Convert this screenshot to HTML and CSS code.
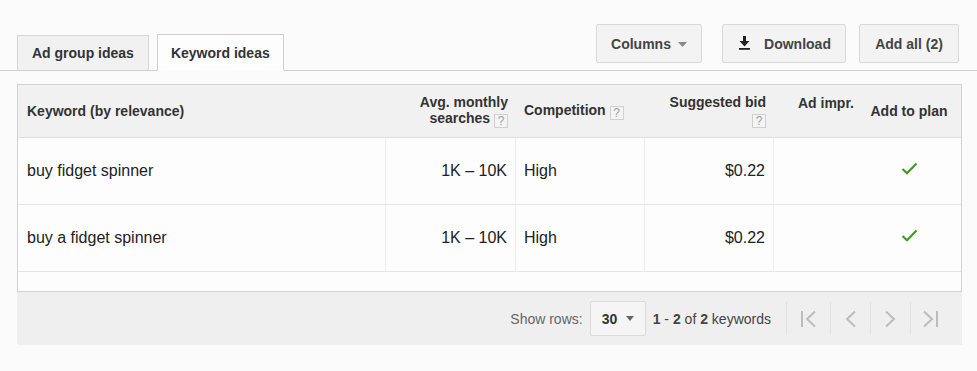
FILE: index.html
```html
<!DOCTYPE html>
<html lang="en">
<head>
    <meta charset="UTF-8">
    <title>Keyword ideas</title>
    <link rel="stylesheet" href="styles.css">
</head>
<body>
    <div class="toolbar">
        <div class="tabs">
            <div class="tab">Ad group ideas</div>
            <div class="tab active">Keyword ideas</div>
        </div>
        <div class="actions">
            <button class="btn btn-columns">
                Columns
                <svg class="caret" width="9" height="5" viewBox="0 0 9 5"><path d="M0 0 H9 L4.5 5 Z" fill="#888"/></svg>
            </button>
            <button class="btn btn-download">
                <svg class="dl-icon" width="11" height="14" viewBox="0 0 11 14">
                    <path d="M4 0 H7 V5 H10.5 L5.5 10.5 L0.5 5 H4 Z" fill="#222"/>
                    <rect x="0" y="12" width="11" height="1.8" fill="#222"/>
                </svg>
                Download
            </button>
            <button class="btn btn-addall">Add all (2)</button>
        </div>
    </div>

    <div class="grid">
        <table class="keyword-table">
            <colgroup>
                <col style="width: 368px">
                <col style="width: 130px">
                <col style="width: 129px">
                <col style="width: 129px">
                <col style="width: 83px">
                <col style="width: 104px">
            </colgroup>
            <thead>
                <tr>
                    <th class="col-keyword">Keyword (by relevance)</th>
                    <th class="col-num">Avg. monthly<br>searches <span class="help">?</span></th>
                    <th class="col-text">Competition <span class="help">?</span></th>
                    <th class="col-num">Suggested bid<br><span class="help">?</span></th>
                    <th class="col-impr">Ad impr.<br>&nbsp;</th>
                    <th class="col-plan">Add to plan</th>
                </tr>
            </thead>
            <tbody>
                <tr>
                    <td class="col-keyword">buy fidget spinner</td>
                    <td class="col-num">1K – 10K</td>
                    <td class="col-text">High</td>
                    <td class="col-num">$0.22</td>
                    <td class="col-impr"></td>
                    <td class="col-plan">
                        <svg class="check" width="17" height="13" viewBox="0 0 17 13"><path d="M1.5 7 L6 11.3 L15.5 1.5" fill="none" stroke="#3f9a22" stroke-width="2.2"/></svg>
                    </td>
                </tr>
                <tr>
                    <td class="col-keyword">buy a fidget spinner</td>
                    <td class="col-num">1K – 10K</td>
                    <td class="col-text">High</td>
                    <td class="col-num">$0.22</td>
                    <td class="col-impr"></td>
                    <td class="col-plan">
                        <svg class="check" width="17" height="13" viewBox="0 0 17 13"><path d="M1.5 7 L6 11.3 L15.5 1.5" fill="none" stroke="#3f9a22" stroke-width="2.2"/></svg>
                    </td>
                </tr>
            </tbody>
        </table>
        <div class="grid-spacer"></div>
    </div>

    <div class="pager">
        <span class="rows-label">Show rows:</span>
        <div class="rows-select">
            <b>30</b>
            <svg width="8" height="5" viewBox="0 0 8 5"><path d="M0 0 H8 L4 5 Z" fill="#666"/></svg>
        </div>
        <span class="rows-count"><b>1</b> - <b>2</b> of <b>2</b> keywords</span>
        <div class="pager-buttons">
            <span class="pager-btn">
                <svg width="17" height="18" viewBox="0 0 17 18"><path d="M2 1 V17 M15 1.5 L7 9 L15 16.5" fill="none" stroke="#bcbcbc" stroke-width="2"/></svg>
            </span>
            <span class="pager-btn">
                <svg width="11" height="18" viewBox="0 0 11 18"><path d="M10 1.5 L2 9 L10 16.5" fill="none" stroke="#bcbcbc" stroke-width="2"/></svg>
            </span>
            <span class="pager-btn">
                <svg width="11" height="18" viewBox="0 0 11 18"><path d="M1 1.5 L9 9 L1 16.5" fill="none" stroke="#bcbcbc" stroke-width="2"/></svg>
            </span>
            <span class="pager-btn">
                <svg width="17" height="18" viewBox="0 0 17 18"><path d="M2 1.5 L10 9 L2 16.5 M15 1 V17" fill="none" stroke="#bcbcbc" stroke-width="2"/></svg>
            </span>
        </div>
    </div>
</body>
</html>
```

FILE: styles.css
```css
* {
    box-sizing: border-box;
}
body {
    margin: 0;
    background: #fbfbfb;
    font-family: 'Liberation Sans', Arial, sans-serif;
    color: #222;
}
.toolbar {
    height: 71px;
    display: flex;
    justify-content: space-between;
    align-items: flex-end;
    padding: 0 18px 0 17px;
    border-bottom: 1px solid #cfcfcf;
}
.tabs {
    display: flex;
    gap: 8px;
    margin-bottom: -1px;
}
.tab {
    height: 36px;
    padding: 0 14px;
    display: flex;
    align-items: center;
    font-size: 14px;
    font-weight: bold;
    color: #333;
    background: #f1f1f1;
    border: 1px solid #d6d6d6;
    border-bottom-color: #cfcfcf;
}
.tab.active {
    background: #fdfdfd;
    border-color: #cfcfcf;
    border-bottom-color: #fdfdfd;
    height: 37px;
    margin-top: -1px;
    padding: 0 13px;
}
.actions {
    display: flex;
    margin-bottom: 7px;
}
.btn {
    height: 39px;
    padding: 0;
    display: flex;
    align-items: center;
    justify-content: center;
    gap: 7px;
    font-family: inherit;
    font-size: 14px;
    font-weight: bold;
    color: #444;
    background: #f3f3f3;
    border: 1px solid #d9d9d9;
    border-radius: 2px;
}
.btn svg {
    flex-shrink: 0;
}
.btn-columns {
    width: 106px;
}
.btn-download {
    width: 124px;
    margin-left: 20px;
    gap: 14px;
    padding-left: 2px;
}
.btn-addall {
    width: 100px;
    margin-left: 13px;
}
.caret {
    margin-top: 1px;
}
.dl-icon {
    margin-top: -1px;
}
.grid {
    margin: 13px 15px 0 17px;
    border: 1px solid #d2d2d2;
    background: #fdfdfd;
}
.keyword-table {
    width: 100%;
    table-layout: fixed;
    border-collapse: separate;
    border-spacing: 0;
}
.keyword-table th {
    height: 53px;
    background: #f1f1f1;
    border-bottom: 1px solid #dedede;
    font-size: 14px;
    font-weight: bold;
    color: #333;
    line-height: 16px;
    vertical-align: middle;
    padding: 0 8px;
}
.keyword-table td {
    height: 67px;
    font-size: 16px;
    color: #222;
    border-bottom: 1px solid #e6e6e6;
    padding: 0 8px;
    vertical-align: middle;
}
.keyword-table td:nth-child(-n+4) {
    border-right: 1px solid #eeeeee;
}
.keyword-table td.col-keyword {
    padding-left: 9px;
}
.col-keyword,
.col-text {
    text-align: left;
}
.keyword-table th.col-keyword {
    padding-left: 9px;
}
.col-num {
    text-align: right;
}
.keyword-table th.col-impr {
    text-align: right;
    padding-right: 3px;
}
.col-plan {
    text-align: center;
}
.keyword-table th.col-plan {
    padding: 0 6px;
}
.check {
    display: block;
    margin: -6px auto 0;
}
.help {
    display: inline-block;
    width: 14px;
    height: 14px;
    line-height: 13px;
    border: 1px solid #d0d0d0;
    background: #f4f4f4;
    color: #a0a0a0;
    font-size: 12px;
    font-weight: normal;
    text-align: center;
    vertical-align: -2px;
    margin-top: 2px;
}
.grid-spacer {
    height: 19px;
}
.pager {
    margin: 0 15px 0 17px;
    height: 53px;
    background: #efefef;
    display: flex;
    align-items: center;
    justify-content: flex-end;
    padding-right: 12px;
    font-size: 14px;
    color: #333;
}
.rows-label {
    color: #666;
}
.rows-select {
    width: 56px;
    height: 35px;
    margin: 0 7px;
    display: flex;
    align-items: center;
    gap: 9px;
    padding-left: 11px;
    background: #f5f5f5;
    border: 1px solid #dadada;
    border-radius: 2px;
    color: #333;
}
.rows-count {
    color: #444;
    margin-right: 15px;
}
.pager-buttons {
    display: flex;
    height: 33px;
}
.pager-btn {
    width: 40px;
    display: flex;
    align-items: center;
    justify-content: center;
    border-left: 1px solid #e2e2e2;
}
.pager-btn:first-child {
    width: 44px;
}
```
